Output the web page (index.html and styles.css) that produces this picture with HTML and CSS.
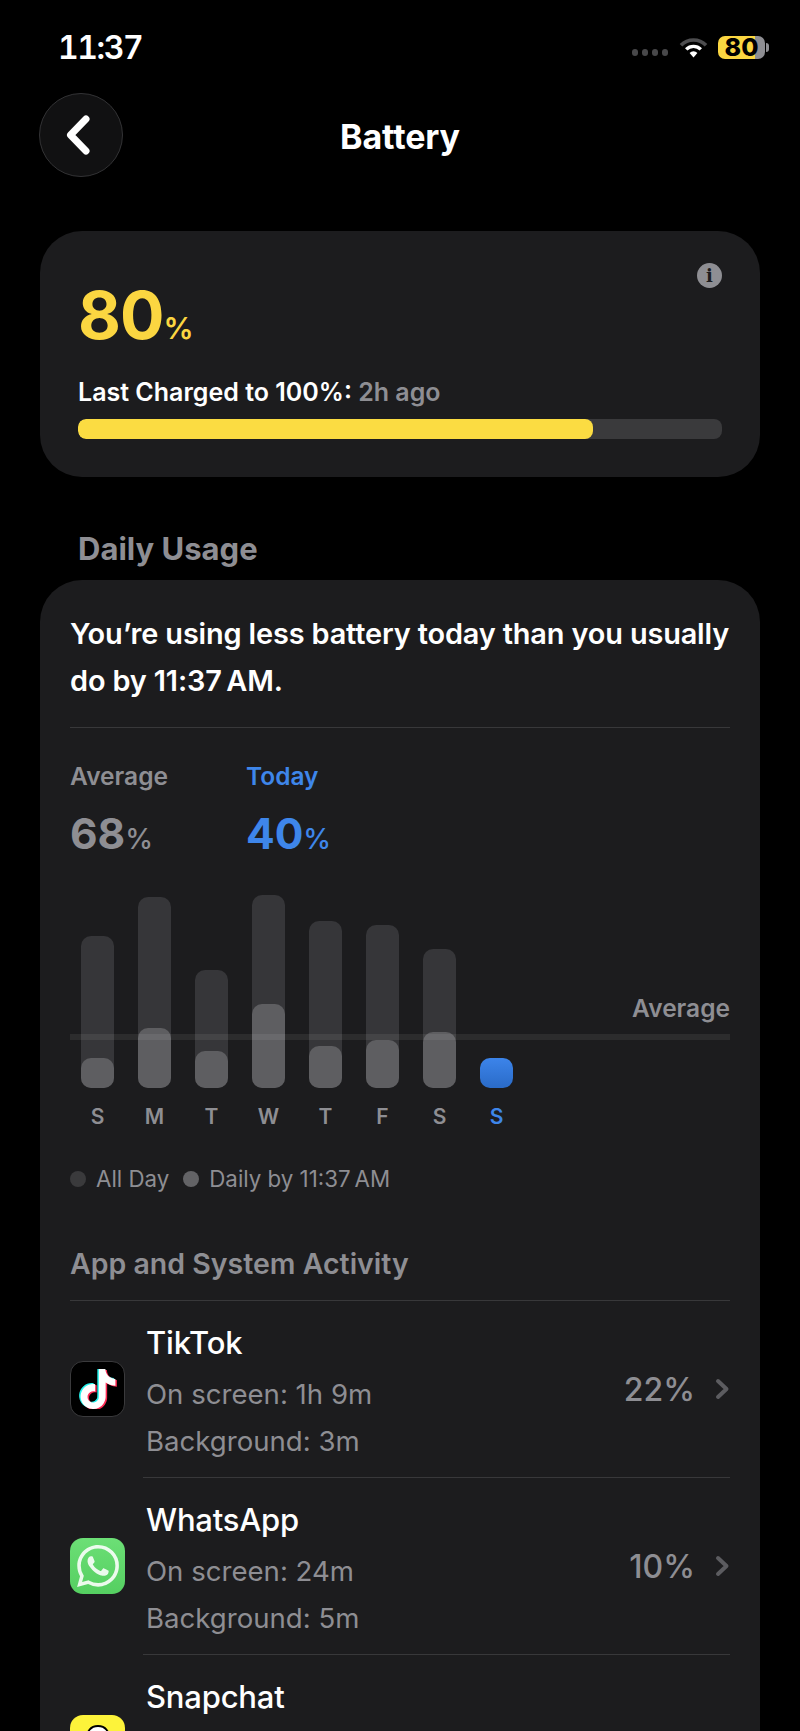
FILE: index.html
```html
<!DOCTYPE html>
<html lang="en">
<head>
    <meta charset="UTF-8">
    <meta name="viewport" content="width=device-width, initial-scale=1.0">
    <title>Battery</title>
    <link rel="stylesheet" href="styles.css">
</head>
<body>
    <div class="status-bar">
        <span class="time">11:37</span>
        <div class="status-icons">
            <div class="signal"><i></i><i></i><i></i><i></i></div>
            <svg class="wifi" width="29" height="21" viewBox="0 0 29 21">
                <path d="M2 8.2 A17.5 17.5 0 0 1 27 8.2" fill="none" stroke="#4d4d4f" stroke-width="3.6"/>
                <path d="M7.2 12.4 A10.4 10.4 0 0 1 21.8 12.4" fill="none" stroke="#fff" stroke-width="3.4"/>
                <path d="M10.6 16 A5.4 5.4 0 0 1 18.4 16 L14.5 20.6 Z" fill="#fff"/>
            </svg>
            <div class="battery-icon"><span class="battery-level">80</span></div>
        </div>
    </div>

    <div class="nav">
        <div class="back">
            <svg width="26" height="40" viewBox="0 0 26 40">
                <path d="M21 4 L5.5 20 L21 36" fill="none" stroke="#fff" stroke-width="7" stroke-linecap="round" stroke-linejoin="round"/>
            </svg>
        </div>
        <h1>Battery</h1>
    </div>

    <div class="card level-card">
        <div class="level-row">
            <div class="level-num">80<small>%</small></div>
            <span class="info">i</span>
        </div>
        <p class="charged">Last Charged to 100%: <span>2h ago</span></p>
        <div class="bar"><div class="bar-fill"></div></div>
    </div>

    <h2 class="section-title">Daily Usage</h2>

    <div class="card usage-card">
        <p class="message">You’re using less battery today than you usually do by 11:37&#8201;AM.</p>

        <div class="stats">
            <div class="stat">
                <div class="stat-label">Average</div>
                <div class="stat-num">68<small>%</small></div>
            </div>
            <div class="stat today">
                <div class="stat-label">Today</div>
                <div class="stat-num">40<small>%</small></div>
            </div>
        </div>

        <div class="chart">
            <div class="avg-line"></div>
            <span class="avg-label">Average</span>
            <div class="col" style="height:152px"><div class="col-inner" style="height:30px"></div></div>
            <div class="col" style="height:191px"><div class="col-inner" style="height:60px"></div></div>
            <div class="col" style="height:118px"><div class="col-inner" style="height:37px"></div></div>
            <div class="col" style="height:193px"><div class="col-inner" style="height:84px"></div></div>
            <div class="col" style="height:167px"><div class="col-inner" style="height:42px"></div></div>
            <div class="col" style="height:163px"><div class="col-inner" style="height:48px"></div></div>
            <div class="col" style="height:139px"><div class="col-inner" style="height:56px"></div></div>
            <div class="col col-today" style="height:30px"></div>
        </div>
        <div class="days">
            <span>S</span><span>M</span><span>T</span><span>W</span><span>T</span><span>F</span><span>S</span><span class="day-today">S</span>
        </div>

        <div class="legend">
            <i class="dot dot-all"></i><span>All Day</span>
            <i class="dot dot-daily"></i><span>Daily by 11:37&#8201;AM</span>
        </div>

        <h3 class="activity-title">App and System Activity</h3>

        <div class="app">
            <div class="app-icon tiktok">
                <svg width="40" height="40" viewBox="0 0 24 24">
                    <defs>
                        <path id="note" d="M12.525.02c1.31-.02 2.61-.01 3.91-.02.08 1.53.63 3.09 1.75 4.17 1.12 1.11 2.7 1.62 4.24 1.79v4.03c-1.44-.05-2.89-.35-4.2-.97-.57-.26-1.1-.59-1.62-.93-.01 2.92.01 5.84-.02 8.75-.08 1.4-.54 2.79-1.35 3.94-1.31 1.92-3.58 3.17-5.91 3.21-1.43.08-2.86-.31-4.08-1.03-2.02-1.19-3.44-3.37-3.65-5.71-.02-.5-.03-1-.01-1.49.18-1.9 1.12-3.72 2.58-4.96 1.66-1.44 3.98-2.13 6.15-1.72.02 1.48-.04 2.96-.04 4.44-.99-.32-2.15-.23-3.02.37-.63.41-1.11 1.04-1.36 1.75-.21.51-.15 1.07-.14 1.61.24 1.64 1.82 3.02 3.5 2.87 1.12-.01 2.19-.66 2.77-1.61.19-.33.4-.67.41-1.06.1-1.79.06-3.57.07-5.36.01-4.03-.01-8.05.02-12.07z"/>
                    </defs>
                    <use href="#note" fill="#25f4ee" x="-.9" y="-.5"/>
                    <use href="#note" fill="#fe2c55" x=".9" y=".6"/>
                    <use href="#note" fill="#fff"/>
                </svg>
            </div>
            <div class="app-body">
                <div class="app-text">
                    <div class="app-name">TikTok</div>
                    <div class="app-sub">On screen: 1h 9m</div>
                    <div class="app-sub">Background: 3m</div>
                </div>
                <span class="app-pct">22%</span>
                <svg class="chevron" width="15" height="22" viewBox="0 0 15 22">
                    <path d="M3 3 L11.5 11 L3 19" fill="none" stroke="#5c5c60" stroke-width="4" stroke-linecap="round" stroke-linejoin="round"/>
                </svg>
            </div>
        </div>

        <div class="app">
            <div class="app-icon whatsapp">
                <svg width="42" height="42" viewBox="0 0 24 24">
                    <path fill="#fff" fill-opacity="0.88" d="M17.472 14.382c-.297-.149-1.758-.867-2.03-.967-.273-.099-.471-.148-.67.15-.197.297-.767.966-.94 1.164-.173.199-.347.223-.644.075-.297-.15-1.255-.463-2.39-1.475-.883-.788-1.48-1.761-1.653-2.059-.173-.297-.018-.458.13-.606.134-.133.298-.347.446-.52.149-.174.198-.298.298-.497.099-.198.05-.371-.025-.52-.075-.149-.669-1.612-.916-2.207-.242-.579-.487-.5-.669-.51-.173-.008-.371-.01-.57-.01-.198 0-.52.074-.792.372-.272.297-1.04 1.016-1.04 2.479 0 1.462 1.065 2.875 1.213 3.074.149.198 2.096 3.2 5.077 4.487.709.306 1.262.489 1.694.625.712.227 1.36.195 1.871.118.571-.085 1.758-.719 2.006-1.413.248-.694.248-1.289.173-1.413-.074-.124-.272-.198-.57-.347m-5.421 7.403h-.004a9.87 9.87 0 01-5.031-1.378l-.361-.214-3.741.982.998-3.648-.235-.374a9.86 9.86 0 01-1.51-5.26c.001-5.45 4.436-9.884 9.888-9.884 2.64 0 5.122 1.03 6.988 2.898a9.825 9.825 0 012.893 6.994c-.003 5.45-4.437 9.884-9.885 9.884m8.413-18.297A11.815 11.815 0 0012.05 0C5.495 0 .16 5.335.157 11.892c0 2.096.547 4.142 1.588 5.945L.057 24l6.305-1.654a11.882 11.882 0 005.683 1.448h.005c6.554 0 11.89-5.335 11.893-11.893a11.821 11.821 0 00-3.48-8.413z"/>
                </svg>
            </div>
            <div class="app-body">
                <div class="app-text">
                    <div class="app-name">WhatsApp</div>
                    <div class="app-sub">On screen: 24m</div>
                    <div class="app-sub">Background: 5m</div>
                </div>
                <span class="app-pct">10%</span>
                <svg class="chevron" width="15" height="22" viewBox="0 0 15 22">
                    <path d="M3 3 L11.5 11 L3 19" fill="none" stroke="#5c5c60" stroke-width="4" stroke-linecap="round" stroke-linejoin="round"/>
                </svg>
            </div>
        </div>

        <div class="app app-last">
            <div class="app-icon snapchat">
                <svg width="44" height="44" viewBox="0 0 44 44">
                    <path d="M22 5 C14 5 11 11 11 17 V22 L6 24 L11 28 L5 33 L14 35 L22 38 L30 35 L39 33 L33 28 L38 24 L33 22 V17 C33 11 30 5 22 5 Z" fill="#fff" stroke="#000" stroke-width="2" stroke-linejoin="round"/>
                </svg>
            </div>
            <div class="app-body">
                <div class="app-text">
                    <div class="app-name">Snapchat</div>
                </div>
            </div>
        </div>
    </div>
</body>
</html>
```

FILE: styles.css
```css
* {
    box-sizing: border-box;
}
html, body {
    height: 1731px;
    overflow: hidden;
}
body {
    margin: 0;
    background-color: #000;
    color: #fff;
    font-family: Inter, "Liberation Sans", sans-serif;
}
h1, h2, h3, p {
    margin: 0;
}
small {
    line-height: 1;
}

/* status bar */
.status-bar {
    height: 93px;
    padding: 2px 35px 0 58px;
    display: flex;
    justify-content: space-between;
    align-items: center;
}
.time {
    font-size: 32px;
    font-weight: 600;
    font-feature-settings: "tnum";
    letter-spacing: -1.4px;
}
.status-icons {
    display: flex;
    align-items: center;
}
.signal {
    display: flex;
    gap: 4px;
    margin-right: 11px;
    margin-top: 10px;
}
.signal i {
    width: 6px;
    height: 7px;
    border-radius: 3px;
    background-color: #48484a;
}
.wifi {
    margin-right: 10px;
}
.battery-icon {
    position: relative;
    width: 47px;
    height: 23px;
    border-radius: 7px;
    background: linear-gradient(90deg, #fbd641 0, #fbd641 79%, #8e8e93 79%);
    text-align: center;
}
.battery-icon::after {
    content: "";
    position: absolute;
    right: -4px;
    top: 7px;
    width: 3px;
    height: 9px;
    border-radius: 0 3px 3px 0;
    background-color: #8e8e93;
}
.battery-level {
    color: #000;
    font-size: 25px;
    font-weight: 800;
    line-height: 23px;
}

/* nav */
.nav {
    height: 84px;
    padding: 0 39px;
    display: grid;
    grid-template-columns: 84px 1fr 84px;
    align-items: center;
    margin-bottom: 54px;
}
.back {
    width: 84px;
    height: 84px;
    border-radius: 50%;
    background-color: #111112;
    border: 1px solid #333335;
    display: flex;
    align-items: center;
    justify-content: center;
    padding-right: 6px;
}
.nav h1 {
    padding-top: 3px;
    text-align: center;
    font-size: 34px;
    font-weight: 700;
    letter-spacing: -0.1px;
}

/* cards */
.card {
    margin: 0 40px;
    background-color: #1c1c1e;
    border-radius: 42px;
}
.level-card {
    height: 246px;
    padding: 32px 38px 38px;
}
.level-row {
    display: flex;
    justify-content: space-between;
    align-items: flex-start;
}
.level-num {
    margin-top: 20px;
    color: #fbd641;
    font-size: 66px;
    font-weight: 700;
    line-height: 64px;
    letter-spacing: -1px;
}
.level-num small {
    font-size: 30px;
    font-weight: 600;
    letter-spacing: 0;
}
.info {
    width: 25px;
    height: 25px;
    border-radius: 50%;
    background-color: #8e8e93;
    color: #1c1c1e;
    font-family: "DejaVu Serif", serif;
    font-size: 18px;
    font-weight: 700;
    line-height: 25px;
    text-align: center;
}
.charged {
    margin-top: 31px;
    font-size: 25px;
    font-weight: 600;
    line-height: 28px;
}
.charged span {
    color: #8e8e93;
}
.bar {
    margin-top: 13px;
    height: 20px;
    border-radius: 8px;
    background-color: #3a3a3c;
    overflow: hidden;
}
.bar-fill {
    width: 80%;
    height: 100%;
    border-radius: 8px;
    background-color: #fbdc42;
}
.section-title {
    margin: 54px 0 13px 78px;
    color: #8e8e93;
    font-size: 31px;
    font-weight: 700;
    line-height: 36px;
}

/* daily usage */
.usage-card {
    padding: 30px 30px 0;
    height: 1260px;
}
.message {
    padding-bottom: 23px;
    border-bottom: 1px solid #38383a;
    font-size: 28.9px;
    font-weight: 600;
    line-height: 47px;
    letter-spacing: -0.15px;
}
.stats {
    display: flex;
    gap: 78px;
    margin-top: 34px;
    color: #8e8e93;
}
.today {
    color: #3e86ea;
}
.stat-label {
    font-size: 24.5px;
    font-weight: 600;
    line-height: 28px;
}
.stat-num {
    margin-top: 20px;
    font-size: 42.5px;
    font-weight: 700;
    line-height: 48px;
}
.stat-num small {
    font-size: 28px;
    font-weight: 500;
}
.chart {
    position: relative;
    margin-top: 30px;
    height: 200px;
    padding-left: 11px;
    display: flex;
    gap: 24px;
    align-items: flex-end;
}
.avg-line {
    position: absolute;
    left: 0;
    right: 0;
    bottom: 48px;
    height: 6px;
    background-color: rgba(255, 255, 255, 0.07);
}
.avg-label {
    position: absolute;
    right: 0;
    bottom: 66px;
    color: #8e8e93;
    font-size: 24.5px;
    font-weight: 600;
    line-height: 28px;
}
.col {
    width: 33px;
    border-radius: 10px;
    background-color: #363639;
    display: flex;
    align-items: flex-end;
}
.col-inner {
    width: 100%;
    border-radius: 10px;
    background-color: #5e5e61;
}
.col-today {
    background: linear-gradient(180deg, #3c84ea, #2a6bc8);
}
.days {
    margin-top: 17px;
    padding-left: 11px;
    display: flex;
    gap: 24px;
    color: #8e8e93;
    font-size: 21px;
    font-weight: 600;
    line-height: 24px;
}
.days span {
    width: 33px;
    text-align: center;
}
.days .day-today {
    color: #3e86ea;
}
.legend {
    margin-top: 36px;
    display: flex;
    align-items: center;
    color: #8e8e93;
    font-size: 22.3px;
    line-height: 28px;
}
.dot {
    width: 16px;
    height: 16px;
    border-radius: 50%;
    margin-right: 10px;
}
.dot-all {
    background-color: #3a3a3c;
}
.dot-daily {
    margin-left: 14px;
    background-color: #636366;
}
.activity-title {
    margin-top: 55px;
    padding-bottom: 20px;
    border-bottom: 1px solid #38383a;
    color: #8e8e93;
    font-size: 28.5px;
    font-weight: 600;
    line-height: 32px;
}

/* app rows */
.app {
    display: flex;
    align-items: center;
}
.app-icon {
    flex: none;
    width: 55px;
    height: 56px;
    margin-top: -2px;
    border-radius: 13px;
    display: flex;
    align-items: center;
    justify-content: center;
    overflow: hidden;
}
.tiktok {
    background-color: #000;
    border: 1px solid #3a3a3c;
}
.whatsapp {
    background: linear-gradient(180deg, #6cdf76, #55cf61);
}
.snapchat {
    background-color: #fdf33a;
}
.app-body {
    flex: 1;
    height: 177px;
    margin-left: 18px;
    padding-left: 3px;
    border-bottom: 1px solid #38383a;
    display: flex;
    align-items: center;
}
.app-last .app-body {
    border-bottom: none;
}
.app-text {
    flex: 1;
    align-self: flex-start;
    padding-top: 24px;
}
.app-name {
    margin-bottom: 10px;
    font-size: 31px;
    font-weight: 500;
    line-height: 36px;
    letter-spacing: -0.2px;
}
.app-sub {
    color: #8e8e93;
    font-size: 27.6px;
    line-height: 47px;
}
.app-pct {
    color: #8e8e93;
    font-size: 32px;
    font-weight: 500;
}
.chevron {
    margin-left: 20px;
}
```
